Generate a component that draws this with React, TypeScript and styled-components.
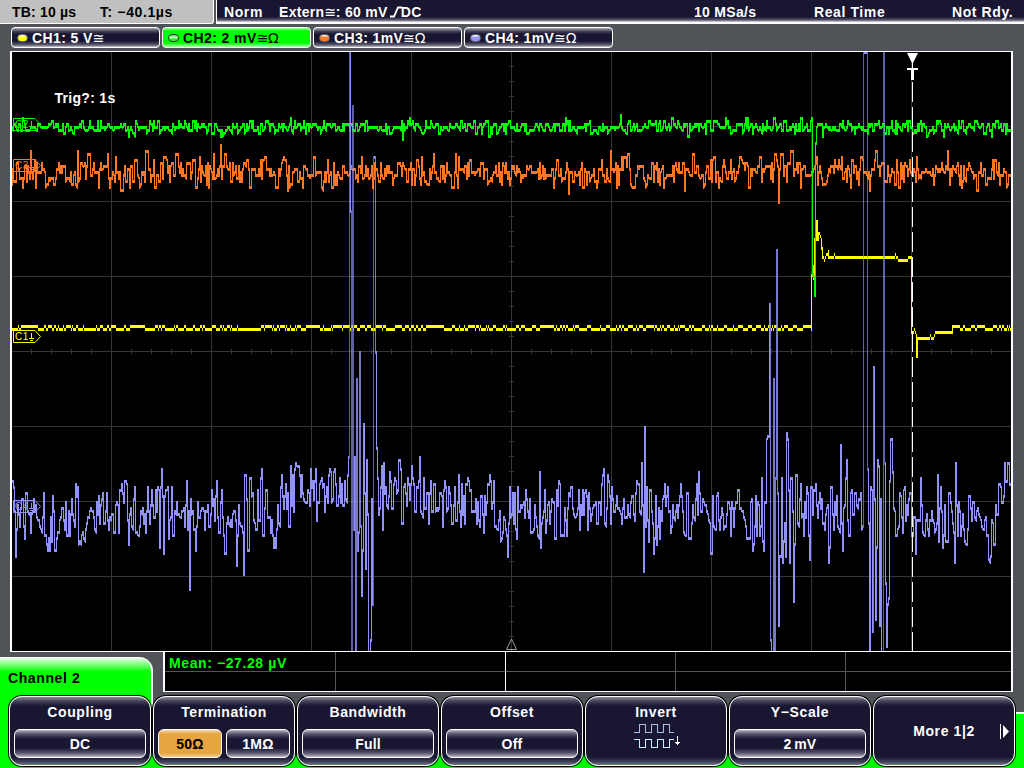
import React from 'react'
import styled, { createGlobalStyle } from 'styled-components'

const GlobalStyle = createGlobalStyle`
  * {
    box-sizing: border-box;
  }
  body {
    margin: 0;
    background: #505357;
    overflow: hidden;
    font-family: 'Liberation Sans', Arial, sans-serif;
    font-weight: bold;
    font-size: 14px;
    letter-spacing: 0.6px;
    color: #fff;
  }
`

const green = '#00ff00'
const navy = '#191632'

const Screen = styled.div`
  width: 1024px;
  height: 768px;
  display: flex;
  flex-direction: column;
  background: #505357;
`
const Header = styled.header`
  display: flex;
  height: 24px;
  gap: 2px;
  line-height: 24px;
`
const TimePanel = styled.div`
  width: 214px;
  padding-left: 12px;
  display: flex;
  color: #000;
  background: #c0c0c0;
  border-right: 1px solid #fff;
  border-bottom: 1px solid #fff;
  border-bottom-right-radius: 3px;
`
const StatusPanel = styled.div`
  flex: 1;
  display: flex;
  padding-left: 7px;
  background: linear-gradient(${navy} 0 17px, #5b586e 20px, #e0e0e6 22px, #fff 22px);
  border-left: 1px solid #fff;
`
const Field = styled.span<{ $width?: number; $spacing?: number }>`
  width: ${p => (p.$width ? p.$width + 'px' : 'auto')};
  letter-spacing: ${p => p.$spacing ?? 0.6}px;
  white-space: nowrap;
  flex: none;
`
const Coupling = styled.span`
  font-family: 'DejaVu Sans', sans-serif;
  font-weight: normal;
  font-size: 14px;
  letter-spacing: -0.3px;
  line-height: 1;
`
const EdgeIcon = styled.svg`
  margin: 0 -1px 0 2px;
  vertical-align: -1px;
`
const ChannelBar = styled.nav`
  display: flex;
  gap: 2px;
  height: 27px;
  padding: 3px 0 3px 11px;
`
const ChannelButton = styled.div<{ $active?: boolean }>`
  display: flex;
  align-items: center;
  width: 149px;
  padding-left: 5px;
  border: 1px solid #fff;
  border-radius: 4px;
  color: ${p => (p.$active ? '#000' : '#fff')};
  background: ${p =>
    p.$active
      ? `linear-gradient(#a0ffa0, ${green} 3px, ${green} 15px, #b0ffb0)`
      : `linear-gradient(#aaa9b5, #4c4a60 3px, ${navy} 6px, ${navy} 13px, #605e72 17px, #c6c6cc)`};
`
const Lamp = styled.i<{ $color: string; $off?: boolean }>`
  width: 11px;
  height: 8px;
  margin-right: 4px;
  border-radius: 4px;
  border: 1px solid ${p => (p.$off ? '#333' : '#666')};
  background: ${p =>
    p.$off
      ? `linear-gradient(${p.$color}, #d8ffd8 45%, ${p.$color} 65%)`
      : `linear-gradient(#fff, ${p.$color} 45%)`};
`
const ScopeFrame = styled.main`
  height: 601px;
  width: 1003px;
  margin-left: 10px;
  border: solid #fff;
  border-width: 1px 2px 1px 2px;
  background: #000;
`
const Plot = styled.svg`
  display: block;
  font-family: 'Liberation Sans', Arial, sans-serif;
`
const Footer = styled.footer`
  height: 116px;
  background:
    linear-gradient(#fff 0 2px, ${green} 2px) right bottom / 10px 56px no-repeat,
    linear-gradient(${green}, ${green}) left bottom / 100% 13px no-repeat;
`
const InfoRow = styled.div`
  display: flex;
  height: 43px;
`
const ChannelTab = styled.div`
  flex: none;
  width: 153px;
  height: 98px;
  margin: 5px 10px 0 0;
  padding: 13px 8px;
  color: #000;
  border-right: 2px solid #fff;
  border-top-right-radius: 14px;
  background: linear-gradient(#fff, #c8ffc8 3px, ${green} 15px);
`
const Measurements = styled.div`
  display: grid;
  grid-template-columns: 171px 170px 170px 170px 165px;
  grid-template-rows: 20px 19px;
  height: 40px;
  width: 850px;
  background: #000;
  border: solid #fff;
  border-width: 0 2px 1px 2px;
  color: ${green};
`
const Cell = styled.div<{ $edge?: string }>`
  border-right: 1px solid ${p => p.$edge || '#555'};
  border-bottom: 1px solid #555;
  padding-left: 4px;
  line-height: 22px;
  white-space: nowrap;
  &:nth-child(n + 6) {
    border-bottom: 0;
  }
  &:nth-child(5n) {
    border-right: 0;
  }
`
const SoftKeys = styled.div`
  position: relative;
  display: flex;
  gap: 2px;
  margin: 1px 0 0 9px;
`
const SoftKey = styled.div<{ $wide?: boolean }>`
  position: relative;
  flex: none;
  display: flex;
  flex-direction: column;
  align-items: center;
  justify-content: ${p => (p.$wide ? 'center' : 'flex-start')};
  width: 142px;
  height: 70px;
  padding: ${p => (p.$wide ? '0' : '7px 4px 0')};
  line-height: 17px;
  border: 1px solid #fff;
  border-radius: 13px;
  box-shadow: 0 0 0 1px #000;
  background: linear-gradient(#8c8b99, #46445a 4px, ${navy} 9px, ${navy} 60px, #46445a 65px, #77768a);
`
const Options = styled.div`
  display: flex;
  gap: 4px;
  width: 132px;
  height: 29px;
  margin-top: 8px;
`
const Option = styled.div<{ $selected?: boolean }>`
  flex: 1;
  line-height: 28px;
  text-align: center;
  letter-spacing: 0.2px;
  word-spacing: -1.5px;
  border: 1px solid #fff;
  border-radius: 6px;
  color: ${p => (p.$selected ? '#000' : '#fff')};
  background: ${p =>
    p.$selected
      ? 'linear-gradient(#f4d9b0, #e6a540 4px, #e6a540 23px, #f2cf98)'
      : `linear-gradient(#bbbac4, #56546a 4px, ${navy} 9px, ${navy} 18px, #56546a 23px, #bbbac4)`};
`
const InvertIcon = styled.svg`
  margin-left: 4px;
`
const MoreArrow = styled.svg`
  position: absolute;
  right: 4px;
  top: 27px;
`

// repeatable noise source, so every sweep looks the same
const random = (seed: number) => () => {
  seed = (seed * 1664525 + 1013904223) % 4294967296
  return seed / 4294967296
}

const X0 = 12
const X1 = 1010

const interpolate = (points: number[], jitter = 0) => {
  const next = random(77)
  const out: number[] = []
  let i = 0
  for (let x = X0; x <= X1; x++) {
    while (i < points.length - 4 && points[i + 2] < x) i += 2
    const [xa, ya, xb, yb] = points.slice(i, i + 4)
    const wobble = x === xa || x === xb ? 0 : (next() - 0.5) * jitter
    const t = xb === xa ? 1 : Math.max(0, Math.min(1, (x - xa) / (xb - xa) + wobble))
    out.push(Math.round((ya + (yb - ya) * t) / 3) * 3)
  }
  return out
}

const noise = (seed: number, base: number, spread: number, hold: number) => {
  const next = random(seed)
  const out: number[] = []
  let y = base
  for (let x = X0; x <= X1; x++) {
    if (next() > hold) {
      const n = next() + next() + next() - 1.5
      const burst = next() > 0.92 ? 1.6 : 1
      y = base + Math.round((n * spread * burst) / 3) * 3
    }
    out.push(y)
  }
  return out
}

const ch1 = noise(11, 327, 20, 0.45).map(y => (y > 327 ? 328 : y < 327 ? 325 : 328))
interpolate([
  811, 328, 812, 274, 813, 264, 814, 276, 815, 238, 816, 238, 817, 220, 818, 238, 819, 232, 821, 238, 823, 255, 824, 257,
  826, 253, 828, 250, 829, 256, 833, 256, 834, 253, 835, 256, 894, 256, 895, 253, 896, 256, 905, 259, 907, 259, 908, 256,
  911, 256, 912, 330, 914, 328, 916, 334, 917, 354, 918, 337, 928, 337, 930, 334, 933, 337, 935, 331, 951, 331, 953, 328,
]).forEach((y, i) => {
  const x = X0 + i
  if (x > 810 && x < 953) ch1[i] = y + 1
})

const ch2 = noise(5, 126, 7, 0.25)
;[[813, 273], [814, 276], [815, 294], [816, 142]].forEach(([x, y]) => {
  ch2[x - X0] = y
})

const ch3 = noise(29, 171, 15, 0.22)

const ch4 = interpolate([
  12, 481, 13, 481, 16, 555, 18, 503, 20, 525, 22, 499, 25, 537, 26, 493, 29, 514, 31, 531, 34, 499, 37, 516, 42, 531,
  44, 493, 46, 534, 50, 549, 53, 496, 55, 549, 59, 530, 63, 508, 65, 528, 66, 502, 67, 534, 69, 510, 70, 534, 72, 499,
  75, 525, 76, 484, 81, 543, 83, 530, 85, 540, 88, 517, 91, 508, 94, 515, 96, 531, 99, 496, 100, 522, 103, 493, 104, 522,
  107, 493, 109, 528, 112, 514, 115, 531, 117, 502, 119, 531, 120, 490, 122, 484, 124, 501, 126, 481, 129, 543, 131, 506,
  133, 528, 135, 487, 136, 531, 139, 534, 143, 507, 146, 531, 148, 487, 150, 522, 152, 490, 154, 516, 158, 487, 160, 546,
  162, 469, 164, 552, 165, 496, 168, 487, 169, 537, 172, 487, 174, 534, 177, 502, 180, 516, 184, 508, 185, 525, 187, 481,
  188, 528, 189, 510, 190, 588, 191, 499, 194, 528, 196, 549, 198, 502, 200, 516, 203, 507, 205, 528, 208, 505, 210, 525, 212, 490,
  215, 520, 217, 481, 219, 531, 222, 490, 225, 552, 228, 517, 232, 525, 235, 511, 236, 520, 237, 564, 239, 505, 241, 525, 243, 530,
  244, 573, 245, 475, 249, 549, 250, 478, 254, 519, 257, 528, 258, 490, 260, 520, 262, 469, 263, 534, 266, 490, 269, 516, 271, 531,
  272, 519, 276, 546, 278, 505, 280, 525, 282, 475, 284, 508, 286, 484, 289, 525, 291, 466, 294, 510, 296, 463, 299, 466,
  301, 495, 302, 475, 304, 498, 306, 502, 308, 490, 310, 505, 311, 469, 314, 499, 316, 469, 317, 519, 320, 484, 322, 478,
  325, 510, 327, 487, 328, 501, 330, 469, 332, 501, 335, 469, 338, 504, 340, 478, 341, 502, 342, 484, 344, 504, 345, 481,
  347, 501, 348, 475, 349, 456, 350, 52, 352, 650, 353, 106, 354, 528, 355, 457, 356, 650, 357, 379, 358, 550, 359, 530,
  360, 352, 361, 525, 362, 595, 364, 424, 366, 568, 367, 460, 368, 514, 369, 650, 370, 650, 371, 640, 372, 499, 373, 604,
  374, 157, 375, 157, 376, 352, 377, 448, 378, 478, 379, 514, 380, 508, 382, 466, 383, 529, 384, 463, 388, 507, 390, 472,
  392, 508, 395, 478, 397, 493, 399, 460, 403, 523, 405, 484, 407, 505, 408, 478, 410, 499, 412, 466, 416, 511, 418, 487,
  420, 457, 421, 511, 423, 517, 424, 478, 426, 507, 428, 493, 429, 523, 431, 481, 433, 511, 435, 484, 436, 511, 439, 506,
  441, 493, 443, 526, 445, 481, 447, 511, 449, 487, 453, 523, 455, 487, 457, 520, 459, 475, 461, 526, 462, 484, 465, 523,
  466, 484, 468, 478, 470, 490, 474, 511, 476, 499, 477, 523, 478, 501, 480, 526, 482, 496, 484, 532, 485, 496, 486, 514,
  490, 475, 492, 508, 494, 481, 496, 526, 498, 529, 500, 511, 501, 541, 504, 517, 506, 529, 508, 556, 510, 487, 511, 517,
  513, 493, 514, 523, 515, 493, 517, 538, 518, 487, 519, 511, 524, 502, 525, 517, 526, 490, 529, 517, 530, 499, 531, 532,
  534, 529, 535, 505, 537, 526, 539, 538, 540, 472, 541, 547, 543, 515, 545, 490, 546, 532, 549, 502, 550, 523, 552, 499,
  554, 500, 556, 538, 559, 481, 561, 535, 563, 535, 565, 508, 567, 535, 568, 508, 572, 487, 574, 514, 576, 517, 579, 490,
  580, 529, 583, 490, 584, 513, 586, 490, 588, 529, 589, 493, 591, 520, 593, 508, 596, 502, 597, 523, 599, 502, 601, 514,
  604, 469, 606, 526, 608, 475, 611, 523, 612, 487, 614, 511, 617, 496, 619, 507, 622, 523, 624, 499, 626, 517, 628, 505,
  630, 517, 633, 496, 635, 520, 637, 481, 639, 484, 641, 514, 642, 463, 643, 505, 644, 571, 645, 427, 646, 526, 647, 487, 649, 541,
  650, 490, 652, 511, 654, 553, 656, 496, 657, 544, 659, 508, 660, 538, 661, 511, 662, 520, 665, 484, 666, 505, 668, 487,
  671, 532, 673, 505, 675, 520, 679, 505, 681, 484, 683, 511, 686, 535, 687, 493, 689, 537, 691, 538, 693, 505, 695, 520,
  697, 484, 698, 514, 699, 472, 701, 511, 703, 499, 706, 505, 708, 514, 710, 522, 711, 553, 713, 496, 715, 529, 718, 493, 720, 529,
  722, 508, 724, 529, 726, 525, 728, 502, 731, 535, 732, 502, 734, 526, 737, 502, 739, 490, 742, 511, 744, 516, 747, 538,
  749, 538, 752, 499, 753, 550, 756, 496, 757, 535, 758, 502, 760, 535, 761, 526, 762, 478, 764, 550, 766, 502, 767, 439, 768, 436,
  769, 436, 770, 304, 771, 640, 772, 650, 773, 650, 774, 379, 775, 650, 776, 478, 777, 248, 778, 493, 779, 625, 780, 556,
  781, 556, 782, 478, 783, 561, 785, 523, 786, 555, 787, 433, 789, 490, 790, 561, 792, 478, 793, 511, 794, 601, 796, 475, 799, 526,
  801, 484, 804, 534, 807, 487, 809, 535, 810, 559, 812, 487, 813, 514, 814, 490, 816, 484, 818, 517, 820, 493, 823, 523, 825, 529,
  827, 508, 828, 505, 829, 561, 832, 487, 834, 529, 837, 496, 838, 526, 840, 532, 841, 445, 843, 550, 845, 505, 847, 460, 848, 520,
  850, 535, 852, 490, 853, 514, 855, 493, 858, 508, 861, 493, 862, 529, 863, 526, 864, 52, 865, 52, 866, 52, 867, 52,
  868, 469, 869, 523, 870, 650, 871, 487, 872, 490, 873, 630, 874, 367, 875, 499, 876, 619, 878, 460, 880, 625, 881, 499,
  882, 650, 883, 650, 884, 52, 885, 463, 886, 583, 887, 646, 888, 604, 889, 598, 890, 481, 891, 439, 893, 472, 894, 508,
  896, 535, 898, 529, 900, 493, 903, 532, 905, 487, 906, 520, 909, 499, 911, 493, 912, 535, 915, 517, 916, 553, 917, 520,
  919, 520, 920, 520, 921, 478, 922, 505, 925, 535, 927, 514, 929, 535, 932, 511, 935, 532, 937, 523, 938, 475, 939, 541, 941, 487,
  943, 547, 945, 505, 946, 541, 948, 541, 949, 493, 952, 511, 954, 532, 955, 561, 956, 463, 958, 535, 959, 502, 961, 535, 963, 514,
  965, 541, 967, 544, 970, 496, 972, 520, 974, 502, 976, 520, 978, 508, 981, 520, 983, 529, 986, 517, 988, 535, 990, 562,
  992, 520, 995, 543, 996, 505, 998, 514, 1000, 484, 1002, 502, 1004, 496, 1005, 463, 1007, 481, 1009, 463, 1010, 484,
], 1.1)

// one vertical stroke per column, from this sample to the next one
const tracePath = (ys: number[], from = 0, to = 9999) =>
  ys
    .map((y, i) => {
      const following = ys[i + 1] ?? y
      const span = Math.abs(y - following)
      if (span < from || span >= to) return ''
      return `M${X0 + i + 0.5} ${Math.min(y, following)}V${Math.max(y, following) + (span > 3 || !span ? 3 : 2)}`
    })
    .join('')

type TraceProps = { ys: number[]; color: string }

const Trace = ({ ys, color }: TraceProps) => (
  <g stroke={color} shapeRendering="crispEdges">
    <path d={tracePath(ys, 0, 170)} />
    <path d={tracePath(ys, 170, 350)} opacity={0.82} />
    <path d={tracePath(ys, 350)} opacity={0.66} />
  </g>
)

// two level trace without the joining strokes
const baselinePath = ys1 =>
  ys1
    .map((y: number, i: number) => {
      const following = ys1[i + 1] ?? y
      const bottom = Math.abs(following - y) > 3 ? Math.max(y, following) + 3 : y + 3
      const top = Math.abs(following - y) > 3 ? Math.min(y, following) : y
      return `M${X0 + i + 0.5} ${top}V${bottom}`
    })
    .join('')

type TagProps = { y: number; name: string; color: string }

const Tag = ({ y, name, color }: TagProps) => (
  <g transform={`translate(13 ${y})`} stroke={color} fill="none">
    <path d="M0.5 0.5H22L27.5 6.5L22 12.5H0.5Z" />
    <text x="2" y="10" fontSize="10" fill={color} stroke="none" fontWeight="normal" letterSpacing="0.5">
      {name}
    </text>
    <path d="M18.5 2.500V8M16 8.500H21M17 10.500H20" shapeRendering="crispEdges" />
  </g>
)

const verticals = [111, 211, 311, 411, 511, 611, 711, 811, 911]
const horizontals = [126, 201, 276, 351, 426, 501, 576]

const Grid = () => {
  const lines = verticals.map(x => `M${x + 0.5} 52V651`).concat(horizontals.map(y => `M12 ${y + 0.5}H1011`))
  const ticks: string[] = []
  for (let x = 31; x < 1011; x += 20) ticks.push(`M${x + 0.5} 349V354`)
  for (let y = 66; y < 651; y += 15) ticks.push(`M509 ${y + 0.5}H514`)
  return <path d={lines.concat(ticks).join('')} stroke="#353535" shapeRendering="crispEdges" />
}

const Scope = () => (
  <ScopeFrame>
    <Plot width="999" height="599" viewBox="12 52 999 599">
      <Grid />
      <path d="M506.500 649.500L511.500 639L516.500 649.500Z" stroke="#999" fill="none" />
      <Trace ys={ch3} color="#ff7722" />
      <path d={baselinePath(ch1)} stroke="#ffff00" shapeRendering="crispEdges" />
      <Trace ys={ch2} color={green} />
      <Trace ys={ch4} color="#9292fc" />
      <Tag y={118} name="C2" color={green} />
      <Tag y={159} name="C3" color="#ff7722" />
      <Tag y={330} name="C1" color="#ffff00" />
      <Tag y={500} name="C4" color="#9292fc" />
      <path d="M912.500 82V651" stroke="#fff" strokeDasharray="20 5" />
      <path d="M907 53H918L913 63H912ZM907 68H918V70H914V80H911V70H907Z" fill="#fff" />
      <path d="M912.500 62V69" stroke="#fff" />
      <text x="54.500" y="103" fill="#fff" fontSize="14" letterSpacing="0.3">
        Trig?: 1s
      </text>
    </Plot>
  </ScopeFrame>
)

const channels = [
  { name: 'CH1: 5 V', suffix: '≅', color: '#ffff00' },
  { name: 'CH2: 2 mV', suffix: '≅Ω', color: '#44dd44', active: true },
  { name: 'CH3: 1mV', suffix: '≅Ω', color: '#ff7722' },
  { name: 'CH4: 1mV', suffix: '≅Ω', color: '#9292fc' },
]

const App = () => (
  <Screen>
    <GlobalStyle />
    <Header>
      <TimePanel>
        <Field $width={88} $spacing={0.2}>TB: 10 µs</Field>
        <Field $spacing={0.6}>T: −40.1µs</Field>
      </TimePanel>
      <StatusPanel>
        <Field $width={55}>Norm</Field>
        <Field $width={415} $spacing={0.3}>
          Extern<Coupling>≅</Coupling>: 60 mV
          <EdgeIcon width="12" height="12" viewBox="0 0 12 12">
            <path d="M0 10.500H4L8 1.500H12" stroke="#fff" strokeWidth="1.800" fill="none" />
          </EdgeIcon>
          DC
        </Field>
        <Field $width={120} $spacing={0.3}>10 MSa/s</Field>
        <Field $width={138}>Real Time</Field>
        <Field>Not Rdy.</Field>
      </StatusPanel>
    </Header>
    <ChannelBar>
      {channels.map(c => (
        <ChannelButton key={c.name} $active={c.active}>
          <Lamp $color={c.color} $off={c.active} />
          <Field $spacing={0.4}>{c.name}</Field>
          <Coupling>{c.suffix}</Coupling>
        </ChannelButton>
      ))}
    </ChannelBar>
    <Scope />
    <Footer>
      <InfoRow>
        <ChannelTab>Channel 2</ChannelTab>
        <Measurements>
          <Cell>Mean: −27.28 µV</Cell>
          <Cell $edge="#fff" />
          <Cell />
          <Cell />
          <Cell />
          <Cell />
          <Cell $edge="#fff" />
          <Cell />
          <Cell />
          <Cell />
        </Measurements>
      </InfoRow>
      <SoftKeys>
        <SoftKey>
          Coupling
          <Options>
            <Option>DC</Option>
          </Options>
        </SoftKey>
        <SoftKey>
          Termination
          <Options>
            <Option $selected>50Ω</Option>
            <Option>1MΩ</Option>
          </Options>
        </SoftKey>
        <SoftKey>
          Bandwidth
          <Options>
            <Option>Full</Option>
          </Options>
        </SoftKey>
        <SoftKey>
          Offset
          <Options>
            <Option>Off</Option>
          </Options>
        </SoftKey>
        <SoftKey>
          Invert
          <InvertIcon width="48" height="28" viewBox="0 0 48 28" fill="none" shapeRendering="crispEdges">
            <path d="M0 11.500H5.500V3.500H11.500V11.500H17.500V3.500H23.500V11.500H29.500V3.500H35.500V11.500H40" stroke="#a8c0e8" />
            <path d="M0 18.500H5.500V26.500H11.500V18.500H17.500V26.500H23.500V18.500H29.500V26.500H35.500V18.500H40" stroke="#c8f0ff" />
            <path d="M43.500 15V24M41 21.500H46M42 22.500H45" stroke="#fff" />
          </InvertIcon>
        </SoftKey>
        <SoftKey>
          Y−Scale
          <Options>
            <Option>2 mV</Option>
          </Options>
        </SoftKey>
        <SoftKey $wide>
          More 1|2
          <MoreArrow width="10" height="15" viewBox="0 0 10 15">
            <path d="M0.500 0V15" stroke="#fff" />
            <path d="M3 1L9 7.500L3 14Z" fill="#fff" />
          </MoreArrow>
        </SoftKey>
      </SoftKeys>
    </Footer>
  </Screen>
)

export default App
